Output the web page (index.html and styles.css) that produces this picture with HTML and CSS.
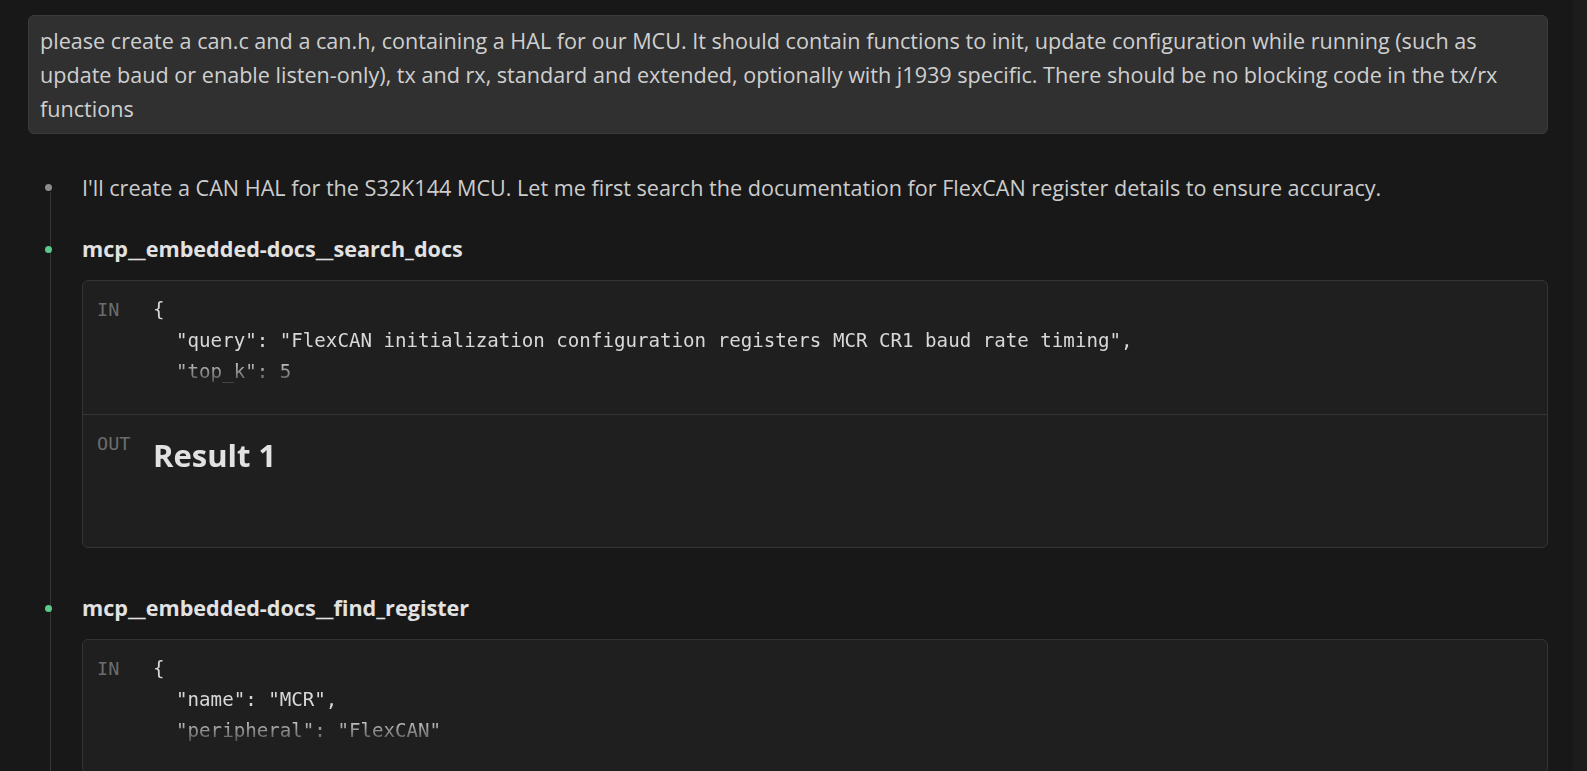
FILE: index.html
```html
<!DOCTYPE html>
<html lang="en">
<head>
<meta charset="utf-8">
<title>CAN HAL chat</title>
<link rel="stylesheet" href="styles.css">
</head>
<body>
<div class="app">
  <main class="chat">
    <div class="user-msg">please create a can.c and a can.h, containing a HAL for our MCU. It should contain functions to init, update configuration while running (such as update baud or enable listen-only), tx and rx, standard and extended, optionally with j1939 specific. There should be no blocking code in the tx/rx functions</div>

    <div class="timeline">
      <div class="item item-text">
        <span class="dot dot-gray"></span>
        <p class="item-para">I'll create a CAN HAL for the S32K144 MCU. Let me first search the documentation for FlexCAN register details to ensure accuracy.</p>
      </div>

      <div class="item item-tool">
        <span class="dot dot-green"></span>
        <div class="tool-name">mcp__embedded-docs__search_docs</div>
        <div class="tool-box">
          <div class="tool-sec">
            <div class="tool-label">IN</div>
            <div class="tool-body fade">
<pre class="code">{
  "query": "FlexCAN initialization configuration registers MCR CR1 baud rate timing",
  "top_k": 5
}</pre>
            </div>
          </div>
          <div class="tool-sec tool-sec-out">
            <div class="tool-label">OUT</div>
            <div class="tool-body fade">
              <h1 class="result-title">Result 1</h1>
            </div>
          </div>
        </div>
      </div>

      <div class="item item-tool">
        <span class="dot dot-green"></span>
        <div class="tool-name">mcp__embedded-docs__find_register</div>
        <div class="tool-box">
          <div class="tool-sec">
            <div class="tool-label">IN</div>
            <div class="tool-body fade">
<pre class="code">{
  "name": "MCR",
  "peripheral": "FlexCAN"
}</pre>
            </div>
          </div>
        </div>
      </div>
    </div>
  </main>
  <div class="scrollbar"></div>
</div>
</body>
</html>
```
FILE: styles.css
```css
html, body {
  margin: 0;
  padding: 0;
  height: 100%;
  background: #181818;
  overflow: hidden;
}

.app {
  display: flex;
  height: 771px;
  overflow: hidden;
  font-family: "Open Sans", "Noto Sans", sans-serif;
  font-size: 21.6px;
  color: #cccccc;
}

.chat {
  flex: 1;
  min-width: 0;
  padding: 15px 25px 0 28px;
}

.scrollbar {
  width: 14px;
  flex: none;
  background: #1c1c1c;
}

.user-msg {
  background: #303030;
  border: 1px solid #3b3b3b;
  border-radius: 6px;
  padding: 8px 11px 7px 11px;
  line-height: 34px;
  color: #cfcfcf;
}

.timeline {
  position: relative;
  margin-top: 37px;
}

.timeline::before {
  content: "";
  position: absolute;
  left: 22px;
  top: 21px;
  bottom: -400px;
  width: 1px;
  background: #353535;
}

.item {
  position: relative;
  padding-left: 54px;
  margin-bottom: 27px;
}

.item-tool {
  margin-bottom: 43px;
}

.dot {
  position: absolute;
  left: 17px;
  width: 7px;
  height: 7px;
  border-radius: 50%;
}

.dot-gray {
  top: 12.5px;
  background: #8c8c8c;
}

.dot-green {
  top: 14px;
  background: #5acb8a;
}

.item-para {
  margin: 0;
  line-height: 34px;
  color: #cccccc;
}

.tool-name {
  font-weight: 700;
  line-height: 34px;
  color: #e2e2e2;
  margin-bottom: 14px;
}

.tool-box {
  background: #1f1f1f;
  border: 1px solid #343434;
  border-radius: 6px;
  overflow: hidden;
}

.tool-sec {
  display: grid;
  grid-template-columns: 56px 1fr;
  padding: 13px 14px 14px 14px;
}

.tool-sec-out {
  border-top: 1px solid #343434;
}

.tool-label {
  font-family: "DejaVu Sans Mono", "Liberation Mono", monospace;
  font-size: 18.5px;
  line-height: 31px;
  color: #6c6c6c;
}

.tool-body {
  height: 105.5px;
  overflow: hidden;
}

.fade {
  -webkit-mask-image: linear-gradient(to bottom, #000 62%, transparent 91%);
  mask-image: linear-gradient(to bottom, #000 62%, transparent 91%);
}

.code {
  margin: 0;
  font-family: "DejaVu Sans Mono", "Liberation Mono", monospace;
  font-size: 19.15px;
  line-height: 31px;
  color: #d8d8d8;
  white-space: pre;
}

.result-title {
  margin: 7px 0 0 0;
  font-size: 31px;
  font-weight: 700;
  line-height: 40.3px;
  color: #e2e2e2;
}
```
